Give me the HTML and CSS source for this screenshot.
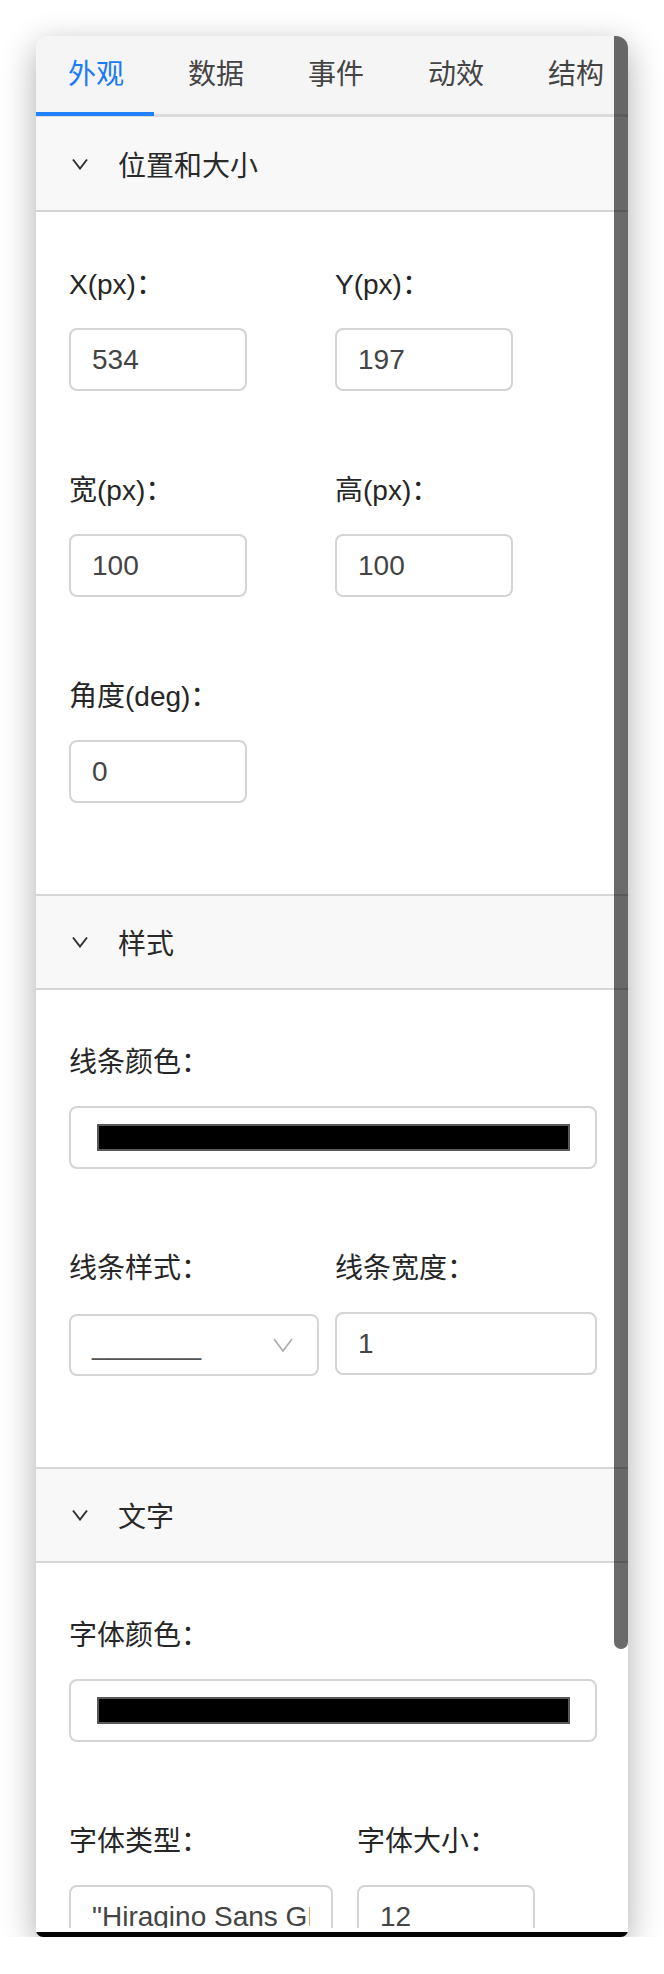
FILE: index.html
```html
<!DOCTYPE html>
<html lang="zh-CN">
<head>
<meta charset="utf-8">
<title>属性面板</title>
<link rel="stylesheet" href="styles.css">
</head>
<body>
<div class="window">
  <div class="viewport">
    <div class="tabs">
      <div class="tab active">外观<span class="ink"></span></div>
      <div class="tab">数据</div>
      <div class="tab">事件</div>
      <div class="tab">动效</div>
      <div class="tab">结构</div>
    </div>

    <section class="panel first">
      <div class="panel-header">
        <svg class="caret" width="16" height="12" viewBox="0 0 16 12"><polyline points="1,1.5 8,10.5 15,1.5" fill="none" stroke="#333" stroke-width="2"/></svg>
        <span>位置和大小</span>
      </div>
      <div class="panel-body">
        <div class="row">
          <div class="item col-a"><div class="label">X(px)：</div><input class="field short" type="text" value="534"></div>
          <div class="item"><div class="label">Y(px)：</div><input class="field short" type="text" value="197"></div>
        </div>
        <div class="row">
          <div class="item col-a"><div class="label">宽(px)：</div><input class="field short" type="text" value="100"></div>
          <div class="item"><div class="label">高(px)：</div><input class="field short" type="text" value="100"></div>
        </div>
        <div class="row">
          <div class="item col-a"><div class="label">角度(deg)：</div><input class="field short" type="text" value="0"></div>
        </div>
      </div>
    </section>

    <section class="panel">
      <div class="panel-header">
        <svg class="caret" width="16" height="12" viewBox="0 0 16 12"><polyline points="1,1.5 8,10.5 15,1.5" fill="none" stroke="#333" stroke-width="2"/></svg>
        <span>样式</span>
      </div>
      <div class="panel-body">
        <div class="row">
          <div class="item grow"><div class="label">线条颜色：</div><div class="field color"><div class="swatch"></div></div></div>
        </div>
        <div class="row">
          <div class="item col-a"><div class="label">线条样式：</div>
            <div class="field select"><span class="line-sample">_______</span>
              <svg width="20" height="14" viewBox="0 0 20 14"><polyline points="1,1 10,13 19,1" fill="none" stroke="#aaa" stroke-width="1.6"/></svg>
            </div>
          </div>
          <div class="item grow"><div class="label">线条宽度：</div><input class="field wide" type="text" value="1"></div>
        </div>
      </div>
    </section>

    <section class="panel">
      <div class="panel-header">
        <svg class="caret" width="16" height="12" viewBox="0 0 16 12"><polyline points="1,1.5 8,10.5 15,1.5" fill="none" stroke="#333" stroke-width="2"/></svg>
        <span>文字</span>
      </div>
      <div class="panel-body">
        <div class="row">
          <div class="item grow"><div class="label">字体颜色：</div><div class="field color"><div class="swatch"></div></div></div>
        </div>
        <div class="row">
          <div class="item col-b"><div class="label">字体类型：</div><input class="field font" type="text" value="&quot;Hiragino Sans GB&quot;, &quot;Microsoft YaHei&quot;"></div>
          <div class="item"><div class="label">字体大小：</div><input class="field short" type="text" value="12"></div>
        </div>
      </div>
    </section>
  </div>
  <div class="frame-gap"></div>
  <div class="frame-bottom"></div>
  <div class="thumb"></div>
</div>
</body>
</html>
```

FILE: styles.css
```css
* { box-sizing: border-box; }

html, body {
  margin: 0;
  padding: 0;
  background: #ffffff;
}

body {
  font-family: "Liberation Sans", "Noto Sans CJK SC", sans-serif;
  color: #2a2a2a;
  padding: 36px 0 0 36px;
}

.window {
  position: relative;
  width: 592px;
  height: 1901px;
  background: #fff;
  border-radius: 12px 12px 7px 7px;
  overflow: hidden;
  box-shadow: 0 10px 34px rgba(0, 0, 0, 0.32);
  display: flex;
  flex-direction: column;
}

.viewport {
  height: 1892px;
  overflow: hidden;
  flex-shrink: 0;
}

.frame-gap {
  height: 4px;
  background: #fff;
  flex-shrink: 0;
}

.frame-bottom {
  height: 5px;
  background: #050505;
  flex-shrink: 0;
}

.thumb {
  position: absolute;
  top: 0;
  right: 0;
  width: 14px;
  height: 1613px;
  background: rgba(0, 0, 0, 0.58);
  border-radius: 0 0 7px 7px;
}

/* Tabs */
.tabs {
  display: flex;
  height: 81px;
  background: #f5f5f5;
  border-bottom: 3px solid #dcdcdc;
}

.tab {
  position: relative;
  flex: 0 0 120px;
  height: 78px;
  line-height: 78px;
  text-align: center;
  font-size: 28px;
  color: #444;
}

.tab.active {
  color: #1a7af8;
}

.ink {
  position: absolute;
  left: 0;
  bottom: -2px;
  width: 118px;
  height: 4px;
  background: #2180fb;
}

/* Panels */
.panel {
  border-top: 2px solid #d6d6d6;
}

.panel.first {
  border-top: none;
}

.panel-header {
  height: 94px;
  display: flex;
  align-items: center;
  padding-left: 36px;
  background: #f8f8f8;
  border-bottom: 2px solid #d6d6d6;
  font-size: 28px;
  color: #2a2a2a;
}

.panel.first .panel-header {
  height: 95px;
}

.caret {
  margin-right: 30px;
  flex-shrink: 0;
}

.panel-body {
  padding: 53px 31px 91px 33px;
}

.row {
  display: flex;
  margin-bottom: 80px;
}

.row:last-child {
  margin-bottom: 0;
}

.item {
  display: flex;
  flex-direction: column;
}

.col-a { width: 266px; }
.col-b { width: 288px; }
.grow { flex: 1; }

.label {
  height: 40px;
  line-height: 40px;
  font-size: 28px;
  color: #262626;
  margin-bottom: 23px;
  white-space: nowrap;
}

.field {
  height: 63px;
  border: 2px solid #d4d4d4;
  border-radius: 8px;
  background: #fff;
  padding: 0 21px;
  font-family: "Liberation Sans", "Noto Sans CJK SC", sans-serif;
  font-size: 28px;
  color: #444;
  outline: none;
  margin: 0;
}

.field.short { width: 178px; }
.field.wide { width: 262px; }
.field.font { width: 264px; }

.field.color {
  width: 528px;
  display: flex;
  align-items: center;
  padding: 0 25px 0 26px;
}

.swatch {
  flex: 1;
  height: 27px;
  background: #000;
  border: 2px solid #595959;
}

.field.select {
  width: 250px;
  display: flex;
  align-items: center;
  justify-content: space-between;
  padding: 0 24px 0 21px;
  margin-top: 2px;
  height: 62px;
}

.line-sample {
  color: #555;
  font-size: 28px;
  line-height: 1;
  letter-spacing: 0;
}
```
